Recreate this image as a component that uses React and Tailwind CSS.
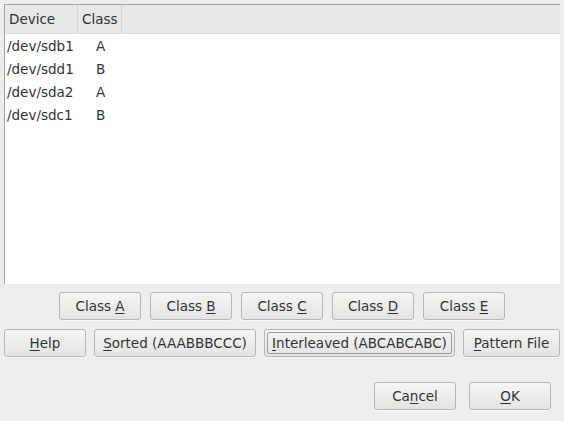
import React from "react";

const rows = [
  ["/dev/sdb1", "A"],
  ["/dev/sdd1", "B"],
  ["/dev/sda2", "A"],
  ["/dev/sdc1", "B"],
];

// label with one underlined mnemonic letter
const Label = ({ pre, u, post }) => (
  <span>
    {pre}
    <span className="underline underline-offset-2">{u}</span>
    {post}
  </span>
);

const Btn = ({ w, children, focused }) => (
  <button
    className={`${w} h-[28px] flex items-center justify-center rounded-[3px] border border-[#b6b6b3] bg-gradient-to-b from-[#f5f5f4] to-[#e4e4e2] text-[13.5px] text-[#2e3436] shadow-[0_1px_0_rgba(255,255,255,0.6)]`}
  >
    {focused ? (
      <span className="w-[calc(100%-4px)] h-[22px] flex items-center justify-center border border-[#9b9b98] rounded-[2px]">
        {children}
      </span>
    ) : (
      children
    )}
  </button>
);

export default function App() {
  return (
    <div
      className="w-[564px] h-[421px] bg-[#ededed] text-[#2e3436] text-[13.5px] flex flex-col"
      style={{ fontFamily: '"DejaVu Sans", sans-serif' }}
    >
      <div className="mt-[4px] ml-[4px] w-[556px] h-[280px] border-l border-t border-[#a4a4a2] bg-white flex flex-col">
        <div className="h-[29px] bg-[#e8e8e7] border-b border-[#dcdcdb] flex">
          <div className="w-[73px] pl-[4px] pt-px flex items-center border-r border-[#d4d4d3]">Device</div>
          <div className="w-[44px] pl-[4px] pt-px flex items-center border-r border-[#d4d4d3]">Class</div>
        </div>
        {rows.map(([d, c]) => (
          <div key={d} className="h-[23px] pt-[2px] flex items-center">
            <div className="w-[73px] pl-[2px]">{d}</div>
            <div className="pl-[18px]">{c}</div>
          </div>
        ))}
      </div>

      <div className="mt-[8px] flex justify-center gap-[9px]">
        <Btn w="w-[82px]"><Label pre="Class " u="A" /></Btn>
        <Btn w="w-[82px]"><Label pre="Class " u="B" /></Btn>
        <Btn w="w-[82px]"><Label pre="Class " u="C" /></Btn>
        <Btn w="w-[82px]"><Label pre="Class " u="D" /></Btn>
        <Btn w="w-[82px]"><Label pre="Class " u="E" /></Btn>
      </div>

      <div className="mt-[9px] ml-[4px] flex gap-[8px]">
        <Btn w="w-[82px]"><Label u="H" post="elp" /></Btn>
        <Btn w="w-[162px]"><Label u="S" post="orted (AAABBBCCC)" /></Btn>
        <Btn w="w-[191px]" focused><Label u="I" post="nterleaved (ABCABCABC)" /></Btn>
        <Btn w="w-[97px]"><Label u="P" post="attern File" /></Btn>
      </div>

      <div className="mt-[25px] flex justify-end gap-[13px] pr-[13px]">
        <Btn w="w-[82px]"><Label pre="Ca" u="n" post="cel" /></Btn>
        <Btn w="w-[82px]"><Label u="O" post="K" /></Btn>
      </div>
    </div>
  );
}
